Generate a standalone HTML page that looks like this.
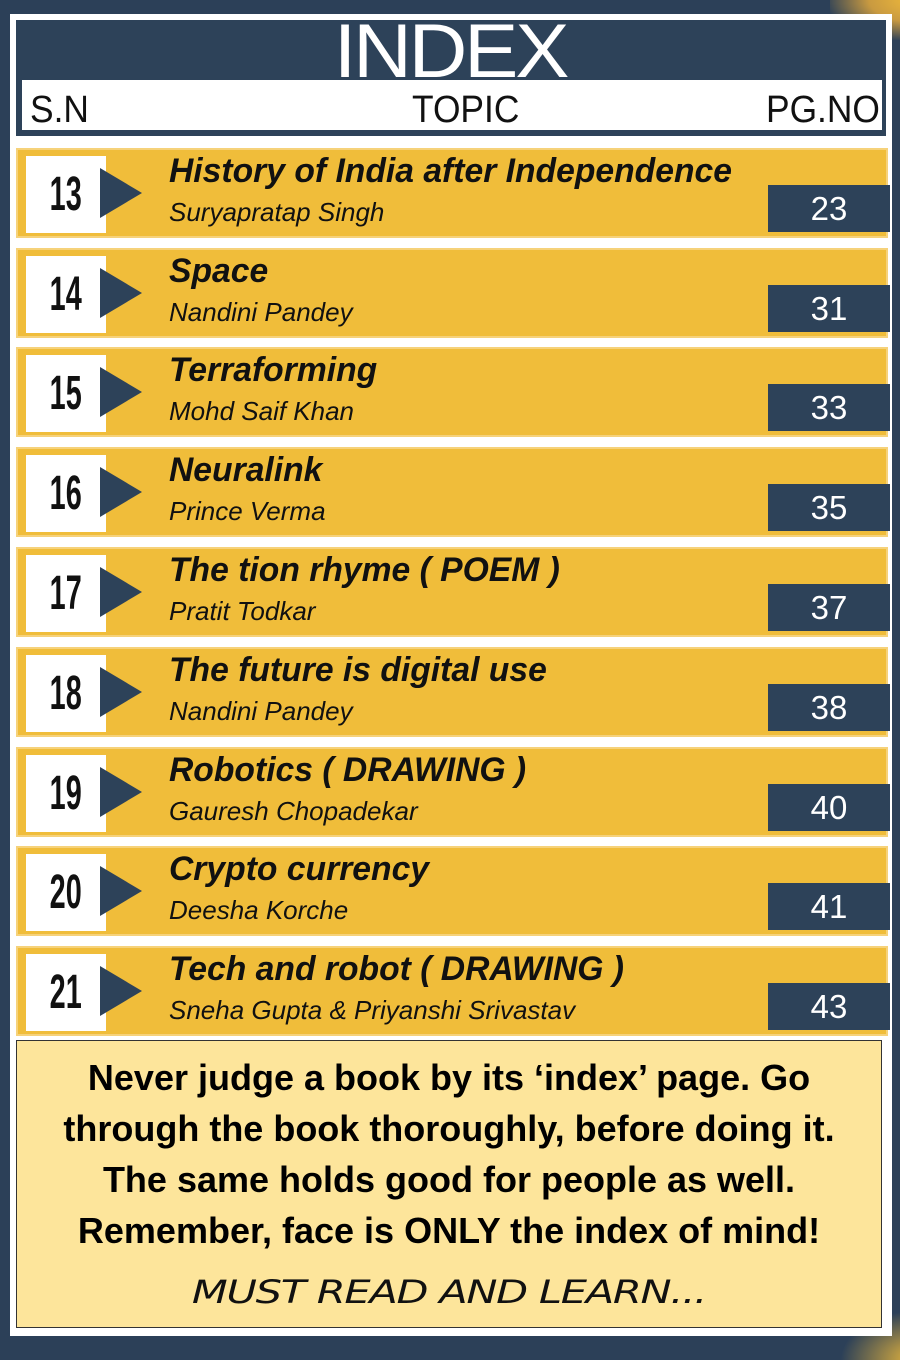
<!DOCTYPE html>
<html><head><meta charset="utf-8"><style>
body{margin:0;width:900px;height:1350px;background:#2c4058;position:relative;overflow:hidden;font-family:"Liberation Sans",sans-serif}
.abs{position:absolute}
.card{left:10px;top:14px;width:882px;height:1322px;background:#fff}
.glow{left:830px;top:0;width:90px;height:40px;background:radial-gradient(ellipse at 100% 0%,#f3bd3a 0%,#c99a40 40%,rgba(44,64,88,0) 75%)}
.glow2{left:840px;top:1310px;width:80px;height:50px;background:radial-gradient(ellipse at 100% 100%,#f3bd3a 0%,rgba(44,64,88,0) 70%)}
.head{left:16px;top:20px;width:870px;height:116px;background:#2d4259}
.strip{left:22px;top:80px;width:860px;height:50px;background:#fff}
.idx{left:0;width:900px;top:14px;text-align:center;color:#fff;font-size:76px;line-height:76px;letter-spacing:-3px;transform:scaleX(1.07)}
.h2{top:88px;font-size:38px;line-height:44px;color:#111;transform:scaleX(0.93);transform-origin:left}
.row{left:16px;width:872px;height:90px;background:#f0bd3a;box-shadow:inset 0 0 0 2px #f6d27a}
.num{left:10px;top:8px;width:80px;height:77px;background:#fff;text-align:center;font-weight:bold;font-size:48px;line-height:77px;color:#111}
.num span{display:inline-block;transform:scaleX(0.6)}
.tri{left:84px;top:20px;width:0;height:0;border-top:25px solid transparent;border-bottom:25px solid transparent;border-left:42px solid #2d4259}
.t{left:153px;top:3px;font-weight:bold;font-style:italic;font-size:34px;line-height:40px;color:#111;white-space:nowrap;transform:scaleX(0.99);transform-origin:left}
.a{left:153px;top:49px;font-style:italic;font-size:26px;line-height:30px;color:#111;white-space:nowrap;transform-origin:left}
.pg{left:752px;top:37px;width:122px;height:47px;background:#2d4259;color:#fff;font-size:33px;line-height:47px;text-align:center}
.quote{left:16px;top:1040px;width:866px;height:288px;background:#fde59b;border:1px solid #333;box-sizing:border-box}
.q{width:100%;text-align:center;font-weight:bold;font-size:36px;line-height:51px;color:#000;position:absolute;top:11px;left:0}
.q div{transform:scaleX(1.0);white-space:nowrap}
.m{position:absolute;top:232px;width:100%;text-align:center;font-style:italic;font-size:32px;color:#111;font-family:"DejaVu Sans",sans-serif;font-weight:200;transform:scaleX(1.3);letter-spacing:-1px}
</style></head><body>
<div class="abs glow"></div><div class="abs glow2"></div>
<div class="abs card"></div>
<div class="abs head"></div>
<div class="abs strip"></div>
<div class="abs idx">INDEX</div>
<div class="abs h2" style="left:30px">S.N</div>
<div class="abs h2" style="left:412px">TOPIC</div>
<div class="abs h2" style="left:766px">PG.NO</div>

<div class="abs row" style="top:148px"><div class="abs num"><span>13</span></div><div class="abs tri"></div><div class="abs t">History of India after Independence</div><div class="abs a">Suryapratap Singh</div><div class="abs pg">23</div></div>
<div class="abs row" style="top:248px"><div class="abs num"><span>14</span></div><div class="abs tri"></div><div class="abs t">Space</div><div class="abs a">Nandini Pandey</div><div class="abs pg">31</div></div>
<div class="abs row" style="top:347px"><div class="abs num"><span>15</span></div><div class="abs tri"></div><div class="abs t">Terraforming</div><div class="abs a">Mohd Saif Khan</div><div class="abs pg">33</div></div>
<div class="abs row" style="top:447px"><div class="abs num"><span>16</span></div><div class="abs tri"></div><div class="abs t">Neuralink</div><div class="abs a">Prince Verma</div><div class="abs pg">35</div></div>
<div class="abs row" style="top:547px"><div class="abs num"><span>17</span></div><div class="abs tri"></div><div class="abs t">The tion rhyme ( POEM )</div><div class="abs a">Pratit Todkar</div><div class="abs pg">37</div></div>
<div class="abs row" style="top:647px"><div class="abs num"><span>18</span></div><div class="abs tri"></div><div class="abs t">The future is digital use</div><div class="abs a">Nandini Pandey</div><div class="abs pg">38</div></div>
<div class="abs row" style="top:747px"><div class="abs num"><span>19</span></div><div class="abs tri"></div><div class="abs t">Robotics ( DRAWING )</div><div class="abs a">Gauresh Chopadekar</div><div class="abs pg">40</div></div>
<div class="abs row" style="top:846px"><div class="abs num"><span>20</span></div><div class="abs tri"></div><div class="abs t">Crypto currency</div><div class="abs a">Deesha Korche</div><div class="abs pg">41</div></div>
<div class="abs row" style="top:946px"><div class="abs num"><span>21</span></div><div class="abs tri"></div><div class="abs t">Tech and robot ( DRAWING )</div><div class="abs a">Sneha Gupta &amp; Priyanshi Srivastav</div><div class="abs pg">43</div></div>

<div class="abs quote">
<div class="q"><div>Never judge a book by its ‘index’ page. Go</div><div>through the book thoroughly, before doing it.</div><div>The same holds good for people as well.</div><div>Remember, face is ONLY the index of mind!</div></div>
<div class="m">MUST READ AND LEARN...</div>
</div>
</body></html>
